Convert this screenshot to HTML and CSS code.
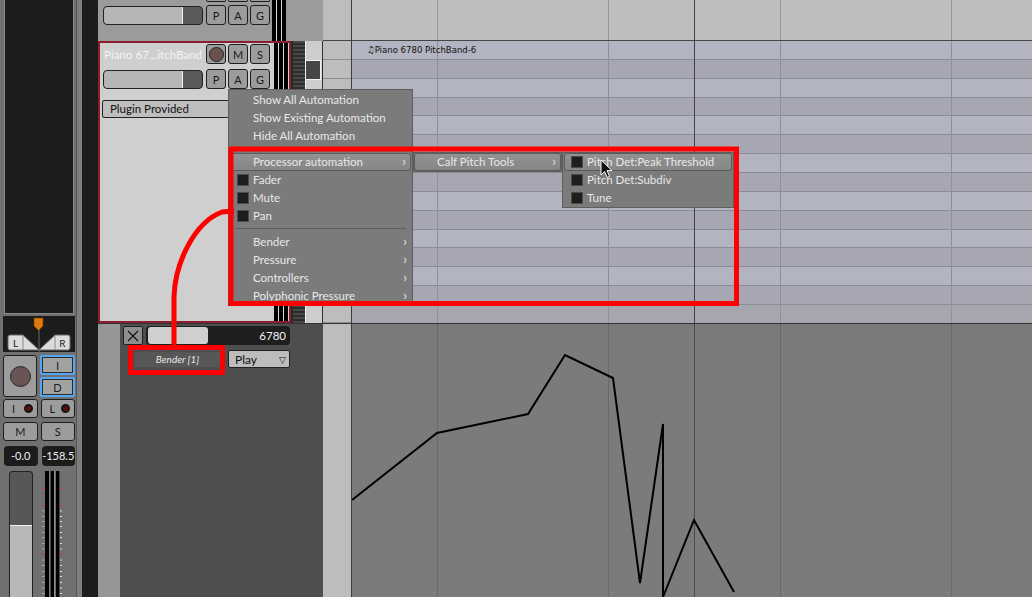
FILE: index.html
```html
<!DOCTYPE html>
<html lang="en">
<head>
    <meta charset="UTF-8">
    <title>Automation menu</title>
    <link rel="stylesheet" href="styles.css">
</head>
<body>
    <div class="app">
        <!-- mixer strip -->
        <aside class="strip">
            <div class="strip-body">
                <div class="plugin-box"></div>
                <div class="panner">
                    <svg width="72" height="36" viewBox="0 0 72 36">
                        <line x1="36" y1="2" x2="36" y2="36" stroke="#666" stroke-width="1"/>
                        <path d="M7 19 H20 L36 34 H7 A2 2 0 0 1 5 32 V21 A2 2 0 0 1 7 19 Z" fill="#dcdcdc" stroke="#6a6a6a"/>
                        <path d="M65 19 H52 L36 34 H65 A2 2 0 0 0 67 32 V21 A2 2 0 0 0 65 19 Z" fill="#dcdcdc" stroke="#6a6a6a"/>
                        <line x1="20" y1="19" x2="20" y2="34" stroke="#8a8a8a"/>
                        <line x1="52" y1="19" x2="52" y2="34" stroke="#8a8a8a"/>
                        <text x="12.5" y="30.5" font-size="10" text-anchor="middle" fill="#222" font-family="Lato, sans-serif">L</text>
                        <text x="59.5" y="30.5" font-size="10" text-anchor="middle" fill="#222" font-family="Lato, sans-serif">R</text>
                        <polygon points="31,2 40,2 40,10 35.5,14.5 31,10" fill="#e0770f" stroke="#7a3d00" stroke-width="0.6"/>
                    </svg>
                </div>
                <div class="rec-row">
                    <div class="btn rec-big"><span class="rec-dot"></span></div>
                    <div class="id-col">
                        <div class="btn blue">I</div>
                        <div class="btn blue">D</div>
                    </div>
                </div>
                <div class="pair">
                    <div class="btn led-btn">I <span class="led"></span></div>
                    <div class="btn led-btn">L <span class="led"></span></div>
                </div>
                <div class="pair pair-ms">
                    <div class="btn">M</div>
                    <div class="btn">S</div>
                </div>
                <div class="pair pair-readout">
                    <span class="readout">-0.0</span>
                    <span class="readout">-158.5</span>
                </div>
                <div class="fader-row">
                    <div class="vfader"></div>
                    <svg class="vmeter" width="20" height="126" viewBox="0 0 20 126">
                        <rect x="3" y="0" width="14.5" height="126" fill="#b5b5b5"/>
                        <rect x="3" y="0" width="4.3" height="126" fill="#000"/>
                        <rect x="8.4" y="0" width="3.8" height="126" fill="#000"/>
                        <rect x="13.6" y="0" width="3.9" height="126" fill="#000"/>
                        <g stroke-width="1">
                            <line x1="0" x2="2.5" y1="5.5" y2="5.5" stroke="#a05555"/><line x1="18" x2="20" y1="5.5" y2="5.5" stroke="#a05555"/>
                            <line x1="0" x2="2.5" y1="11.5" y2="11.5" stroke="#a05555"/><line x1="18" x2="20" y1="11.5" y2="11.5" stroke="#a05555"/>
                            <line x1="0" x2="2.5" y1="17.5" y2="17.5" stroke="#e02a2a"/><line x1="18" x2="20" y1="17.5" y2="17.5" stroke="#e02a2a"/>
                            <line x1="0" x2="2.5" y1="23" y2="23" stroke="#a05555"/><line x1="18" x2="20" y1="23" y2="23" stroke="#a05555"/>
                            <line x1="0" x2="2.5" y1="28.5" y2="28.5" stroke="#a05555"/><line x1="18" x2="20" y1="28.5" y2="28.5" stroke="#a05555"/>
                            <line x1="0" x2="2.5" y1="34.5" y2="34.5" stroke="#e02a2a"/><line x1="18" x2="20" y1="34.5" y2="34.5" stroke="#e02a2a"/>
                            <line x1="0" x2="2.5" y1="40" y2="40" stroke="#aaa"/><line x1="18" x2="20" y1="40" y2="40" stroke="#ddd"/>
                            <line x1="0" x2="2.5" y1="45.5" y2="45.5" stroke="#aaa"/><line x1="18" x2="20" y1="45.5" y2="45.5" stroke="#ddd"/>
                            <line x1="0" x2="2.5" y1="50.5" y2="50.5" stroke="#aaa"/><line x1="18" x2="20" y1="50.5" y2="50.5" stroke="#ddd"/>
                            <line x1="0" x2="2.5" y1="55.5" y2="55.5" stroke="#aaa"/><line x1="18" x2="20" y1="55.5" y2="55.5" stroke="#ddd"/>
                            <line x1="0" x2="2.5" y1="61.5" y2="61.5" stroke="#aaa"/><line x1="18" x2="20" y1="61.5" y2="61.5" stroke="#ddd"/>
                            <line x1="0" x2="2.5" y1="66.5" y2="66.5" stroke="#aaa"/><line x1="18" x2="20" y1="66.5" y2="66.5" stroke="#ddd"/>
                            <line x1="0" x2="2.5" y1="72.5" y2="72.5" stroke="#aaa"/><line x1="18" x2="20" y1="72.5" y2="72.5" stroke="#ddd"/>
                            <line x1="0" x2="2.5" y1="78" y2="78" stroke="#aaa"/><line x1="18" x2="20" y1="78" y2="78" stroke="#ddd"/>
                            <line x1="0" x2="2.5" y1="83.5" y2="83.5" stroke="#e02a2a"/><line x1="18" x2="20" y1="83.5" y2="83.5" stroke="#e02a2a"/>
                            <line x1="0" x2="2.5" y1="89" y2="89" stroke="#aaa"/><line x1="18" x2="20" y1="89" y2="89" stroke="#ddd"/>
                            <line x1="0" x2="2.5" y1="94.5" y2="94.5" stroke="#aaa"/><line x1="18" x2="20" y1="94.5" y2="94.5" stroke="#ddd"/>
                            <line x1="0" x2="2.5" y1="100.5" y2="100.5" stroke="#aaa"/><line x1="18" x2="20" y1="100.5" y2="100.5" stroke="#ddd"/>
                            <line x1="0" x2="2.5" y1="105.5" y2="105.5" stroke="#aaa"/><line x1="18" x2="20" y1="105.5" y2="105.5" stroke="#ddd"/>
                            <line x1="0" x2="2.5" y1="111.5" y2="111.5" stroke="#aaa"/><line x1="18" x2="20" y1="111.5" y2="111.5" stroke="#ddd"/>
                            <line x1="0" x2="2.5" y1="117" y2="117" stroke="#aaa"/><line x1="18" x2="20" y1="117" y2="117" stroke="#ddd"/>
                            <line x1="0" x2="2.5" y1="122.5" y2="122.5" stroke="#aaa"/><line x1="18" x2="20" y1="122.5" y2="122.5" stroke="#ddd"/>
                        </g>
                    </svg>
                </div>
            </div>
            <div class="strip-edge"></div>
        </aside>

        <div class="gutter"></div>

        <main class="tracks">
            <!-- track above, mostly scrolled away -->
            <section class="track track-top">
                <div class="head head-top">
                    <div class="head-ctl">
                        <div class="peek"><span></span><span></span><span></span></div>
                        <div class="ctl-row">
                            <div class="hfader"></div>
                            <span class="btn sq">P</span>
                            <span class="btn sq">A</span>
                            <span class="btn sq">G</span>
                        </div>
                    </div>
                    <div class="meter3"></div>
                </div>
                <div class="keys"></div>
                <div class="lane lane-top"></div>
            </section>

            <!-- selected MIDI track -->
            <section class="track track-sel">
                <div class="head head-sel">
                    <div class="sel-box">
                        <div class="head-ctl">
                            <div class="ctl-row name-row">
                                <span class="track-name">Piano 67...itchBand</span>
                                <span class="btn sq"><span class="rec-small"></span></span>
                                <span class="btn sq">M</span>
                                <span class="btn sq">S</span>
                            </div>
                            <div class="ctl-row fader-line">
                                <div class="hfader"></div>
                                <span class="btn sq">P</span>
                                <span class="btn sq">A</span>
                                <span class="btn sq">G</span>
                            </div>
                            <div class="plugin-select">Plugin Provided</div>
                        </div>
                        <div class="meter3"></div>
                    </div>
                    <div class="mini-meter"></div>
                    <div class="vscroll"><div class="knob"></div></div>
                </div>
                <div class="keys keys-rows" id="keyRows"></div>
                <div class="lane lane-notes">
                    <div class="rows" id="noteRows"></div>
                    <span class="region-name">♫Piano 6780 PitchBand-6</span>
                </div>
            </section>

            <!-- automation lane -->
            <section class="track track-auto">
                <div class="head head-auto">
                    <div class="indent"></div>
                    <div class="auto-ctl">
                        <div class="ctl-row">
                            <span class="btn close-btn">
                                <svg width="12" height="12" viewBox="0 0 12 12"><path d="M1 1 L11 11 M11 1 L1 11" stroke="#111" stroke-width="1.1"/></svg>
                            </span>
                            <div class="value-slider"><div class="value-fill"></div><span>6780</span></div>
                        </div>
                        <div class="ctl-row auto-row2">
                            <span class="param-name">Bender [1]</span>
                            <span class="play-select">Play <span class="tri">▽</span></span>
                        </div>
                    </div>
                </div>
                <div class="keys"></div>
                <div class="lane lane-auto">
                    <svg class="curve" width="680" height="273" viewBox="0 0 680 273">
                        <polyline points="0,176 85,109 176,90 213,31 261,54 288,259 311,100 311,273 342,196 382,268" fill="none" stroke="#000" stroke-width="2" stroke-linejoin="miter"/>
                    </svg>
                </div>
            </section>
        </main>
    </div>

    <!-- context menus -->
    <div class="menu menu-main">
        <div class="menu-item">Show All Automation</div>
        <div class="menu-item">Show Existing Automation</div>
        <div class="menu-item">Hide All Automation</div>
        <div class="menu-sep"></div>
        <div class="menu-item sub hover">Processor automation</div>
        <div class="menu-item"><span class="check"></span>Fader</div>
        <div class="menu-item"><span class="check"></span>Mute</div>
        <div class="menu-item"><span class="check"></span>Pan</div>
        <div class="menu-sep"></div>
        <div class="menu-item sub">Bender</div>
        <div class="menu-item sub">Pressure</div>
        <div class="menu-item sub">Controllers</div>
        <div class="menu-item sub">Polyphonic Pressure</div>
    </div>
    <div class="menu menu-plugins">
        <div class="menu-item sub hover">Calf Pitch Tools</div>
    </div>
    <div class="menu menu-params">
        <div class="menu-item hover"><span class="check"></span>Pitch Det:Peak Threshold</div>
        <div class="menu-item"><span class="check"></span>Pitch Det:Subdiv</div>
        <div class="menu-item"><span class="check"></span>Tune</div>
    </div>

    <!-- hand-drawn marks -->
    <svg class="marks" width="1032" height="597" viewBox="0 0 1032 597">
        <rect x="231" y="149" width="505.5" height="154.5" fill="none" stroke="#ff0000" stroke-width="5"/>
        <rect x="130.5" y="347.5" width="92" height="25" fill="none" stroke="#ff0000" stroke-width="5"/>
        <path d="M174 349 V297 C175 262 195 222 222 212 L234 211" fill="none" stroke="#ff0000" stroke-width="5"/>
    </svg>

    <svg class="cursor" width="14" height="20" viewBox="0 0 14 20">
        <path d="M1 1 L1 16 L4.6 12.6 L7.2 18.4 L9.6 17.4 L7 11.6 L12 11.6 Z" fill="#111" stroke="#fff" stroke-width="1"/>
    </svg>

    <script>
        // piano-roll rows, alternating shades
        const noteRows = document.getElementById('noteRows');
        const keyRows = document.getElementById('keyRows');
        for (let i = 0; i < 15; i++) {
            const row = document.createElement('div');
            row.className = 'row';
            noteRows.appendChild(row);
            const key = document.createElement('div');
            key.className = 'key';
            keyRows.appendChild(key);
        }
    </script>
</body>
</html>
```

FILE: styles.css
```css
* {
    margin: 0;
    padding: 0;
    box-sizing: border-box;
}

body {
    width: 1032px;
    height: 597px;
    overflow: hidden;
    position: relative;
    background-color: #1c1c1c;
    font-family: 'Lato', 'DejaVu Sans', sans-serif;
    font-size: 11px;
    color: #1a1a1a;
}

.app {
    display: flex;
    height: 597px;
}

/* mixer strip */
.strip {
    width: 82px;
    flex: none;
    display: flex;
    background-color: #707070;
}

.strip-body {
    width: 72px;
    margin-left: 3px;
    display: flex;
    flex-direction: column;
}

.strip-edge {
    width: 6px;
    margin-left: 1px;
    border-left: 1px solid #555;
    background-color: #7e7e7e;
}

.plugin-box {
    height: 314px;
    flex: none;
    margin: 0 1px;
    background-color: #1c1c1c;
    border: 1px solid #8a8a8a;
    border-top: none;
}

.panner {
    height: 36px;
    flex: none;
    margin-top: 2px;
    background-color: #1c1c1c;
}

.panner svg {
    display: block;
}

.btn {
    display: flex;
    align-items: center;
    justify-content: center;
    background-color: #9c9c9c;
    border: 1px solid #1e1e1e;
    border-radius: 3px;
    color: #1a1a1a;
    font-size: 11px;
}

.rec-row {
    display: flex;
    gap: 3px;
    margin-top: 3px;
    height: 42px;
    flex: none;
}

.rec-big {
    width: 34px;
    height: 42px;
}

.rec-dot {
    width: 21px;
    height: 21px;
    border-radius: 50%;
    background-color: #6b5454;
    border: 1px solid #262626;
}

.id-col {
    width: 35px;
    display: flex;
    flex-direction: column;
    gap: 2px;
}

.btn.blue {
    height: 20px;
    border: 2px solid #55a6f5;
    border-radius: 2px;
    box-shadow: inset 0 0 0 1px #2b2b2b;
    background-color: #a2a2a2;
}

.pair {
    display: flex;
    gap: 3px;
    margin-top: 2px;
    height: 19px;
    flex: none;
}

.pair .btn {
    flex: 1;
}

.pair-ms {
    margin-top: 4px;
}

.led-btn {
    justify-content: space-between !important;
    padding: 0 4px 0 8px;
}

.led {
    width: 9px;
    height: 9px;
    border-radius: 50%;
    background-color: #6a0c0c;
    border: 2px solid #141414;
}

.pair-readout {
    margin-top: 5px;
    height: 20px;
    gap: 4px;
    padding-left: 1px;
}

.readout {
    flex: 1;
    background-color: #1c1c1c;
    border-radius: 4px;
    color: #eee;
    text-align: center;
    line-height: 20px;
    font-size: 11px;
}

.fader-row {
    display: flex;
    margin-top: 5px;
    flex: 1;
}

.vfader {
    width: 24px;
    margin-left: 6px;
    border: 1px solid #222;
    border-bottom: none;
    border-radius: 4px 4px 0 0;
    background: linear-gradient(#575757 0 53px, #f2f2f2 53px 54px, #b8b8b8 54px);
}

.vmeter {
    margin-left: 9px;
    display: block;
}

.gutter {
    width: 16px;
    flex: none;
    background-color: #1c1c1c;
}

/* tracks */
.tracks {
    flex: 1;
    display: flex;
    flex-direction: column;
}

.track {
    display: flex;
    flex: none;
}

.track-top {
    height: 41px;
}

.track-sel {
    height: 282px;
}

.track-auto {
    flex: 1;
    border-top: 1px solid #333;
}

.head {
    width: 225px;
    flex: none;
    display: flex;
}

.keys {
    width: 29px;
    flex: none;
    background-color: #bdbdbd;
    border-right: 1px solid #3c3c3c;
}

.lane {
    flex: 1;
    position: relative;
    --gl: #9a9a9a;
    --bar: #444;
}

.lane::after {
    content: '';
    position: absolute;
    inset: 0;
    pointer-events: none;
    background-image:
        linear-gradient(var(--gl), var(--gl)),
        linear-gradient(var(--gl), var(--gl)),
        linear-gradient(var(--bar), var(--bar)),
        linear-gradient(var(--gl), var(--gl)),
        linear-gradient(var(--gl), var(--gl));
    background-size: 1px 100%;
    background-repeat: no-repeat;
    background-position: 85px 0, 256px 0, 342px 0, 428px 0, 599px 0;
}

/* head: track above */
.head-top {
    background-color: #9b9b9b;
}

.head-ctl {
    width: 176px;
    padding-left: 5px;
}

.peek {
    display: flex;
    gap: 2px;
    margin-left: 103px;
    height: 2px;
}

.peek span {
    width: 20px;
    border: 1px solid #1e1e1e;
    border-top: none;
    border-radius: 0 0 2px 2px;
    background-color: #9c9c9c;
}

.ctl-row {
    display: flex;
    align-items: center;
    gap: 2px;
}

.head-top .ctl-row {
    margin-top: 3px;
}

.hfader {
    width: 100px;
    height: 19px;
    margin-right: 1px;
    border: 1px solid #222;
    border-radius: 4px;
    background: linear-gradient(to right, #b5b5b5 0 78px, #f0f0f0 78px 79px, #5a5a5a 79px);
}

.btn.sq {
    width: 20px;
    height: 20px;
}

.meter3 {
    width: 14px;
    flex: none;
    background: linear-gradient(to right, #000 0 4px, #d8d8d8 4px 5px, #000 5px 9px, #d8d8d8 9px 10px, #000 10px 14px);
}

.head-top .meter3 {
    margin-left: -2px;
}

.lane-top {
    background-color: #bebebe;
    border-bottom: 1px solid #454545;
}

.track-top .keys {
    border-bottom: 1px solid #454545;
}

/* head: selected track */
.head-sel {
    background-color: #9b9b9b;
}

.sel-box {
    width: 193px;
    display: flex;
    border: 2px solid #8c1d2d;
    background-color: #cfcfcf;
}

.sel-box .head-ctl {
    width: 174px;
    padding-left: 3px;
}

.name-row {
    margin-top: 1px;
}

.track-name {
    width: 101px;
    padding-left: 1px;
    color: #f4f4f4;
    font-size: 11.6px;
    white-space: nowrap;
}

.rec-small {
    width: 15px;
    height: 15px;
    border-radius: 50%;
    background-color: #6c5050;
    border: 1px solid #222;
}

.fader-line {
    margin-top: 5px;
}

.plugin-select {
    width: 168px;
    height: 18px;
    margin: 11px 0 0 -1px;
    padding-left: 7px;
    line-height: 16px;
    background-color: #bebebe;
    border: 1px solid #222;
    border-radius: 2px;
    font-size: 11.5px;
    color: #111;
}

.sel-box .meter3 {
    margin-left: 0;
}

.mini-meter {
    width: 14px;
    flex: none;
    background: repeating-linear-gradient(to bottom, #474747 0 2px, #2c2c2c 2px 4px);
    border-left: 2px solid #2a2a2a;
}

.vscroll {
    width: 18px;
    flex: none;
    background-color: #cdcdcd;
    border-left: 1px solid #f2f2f2;
    border-right: 1px solid #2e2e2e;
    padding-top: 19px;
}

.knob {
    width: 15px;
    height: 20px;
    background-color: #474747;
    border: 1px solid #f2f2f2;
    border-left: none;
}

.keys-rows {
    display: flex;
    flex-direction: column;
}

.key {
    flex: 1;
    border-bottom: 1px solid #8e8e8e;
}

.lane-notes {
    --gl: #8f909b;
}

.rows {
    display: flex;
    flex-direction: column;
    height: 100%;
}

.row {
    flex: 1;
    border-bottom: 1px solid #8b8c97;
}

.row:nth-child(odd) {
    background-color: #b3b4c1;
}

.row:nth-child(even) {
    background-color: #a6a7b3;
}

.row:last-child {
    background-color: #a5a6ae;
    border-bottom: none;
}

.region-name {
    position: absolute;
    left: 15px;
    top: 3px;
    font-family: 'DejaVu Sans', sans-serif;
    font-stretch: condensed;
    font-size: 9.5px;
    color: #111;
    z-index: 1;
}

/* head: automation */
.indent {
    width: 22px;
    background-color: #969696;
}

.auto-ctl {
    flex: 1;
    background-color: #4e4e4e;
    padding: 2px 0 0 3px;
}

.close-btn {
    width: 20px;
    height: 19px;
    border-radius: 2px;
    background-color: #8e8e8e;
}

.value-slider {
    position: relative;
    width: 144px;
    height: 19px;
    margin-left: 1px;
    background-color: #1e1e1e;
    border-radius: 4px;
    color: #f2f2f2;
    font-size: 11.5px;
    text-align: right;
    padding-right: 4px;
    line-height: 19px;
}

.value-fill {
    position: absolute;
    left: 2px;
    top: 1px;
    bottom: 1px;
    width: 60px;
    background-color: #cfcfcf;
    border-radius: 3px;
}

.auto-row2 {
    margin-top: 5px;
    gap: 0;
}

.param-name {
    width: 85px;
    height: 15px;
    margin-left: 12px;
    background-color: #575757;
    color: #e8e8e8;
    font-style: italic;
    font-size: 10px;
    text-align: center;
    line-height: 15px;
}

.play-select {
    width: 62px;
    height: 18px;
    margin-left: 8px;
    display: flex;
    justify-content: space-between;
    align-items: center;
    padding: 0 3px 0 6px;
    background-color: #bdbdbd;
    border: 1px solid #222;
    border-radius: 2px;
    font-size: 12px;
    color: #111;
}

.tri {
    font-size: 9px;
}

.lane-auto {
    background-color: #7b7b7b;
    --gl: #686868;
    --bar: #4c4c4c;
}

.curve {
    display: block;
    position: relative;
    z-index: 1;
}

/* context menus */
.menu {
    position: absolute;
    background-color: #7b7b7b;
    border: 1px solid #5e5e5e;
    color: #e8e8e8;
    font-size: 11.5px;
    z-index: 5;
}

.menu-main {
    left: 228px;
    top: 89px;
    width: 185px;
    height: 217px;
    padding-top: 1px;
}

.menu-plugins {
    left: 413px;
    top: 152px;
    width: 149px;
}

.menu-params {
    left: 562px;
    top: 152px;
    width: 172px;
}

.menu-item {
    position: relative;
    height: 18px;
    display: flex;
    align-items: center;
    padding-left: 24px;
    padding-bottom: 2px;
    white-space: nowrap;
}

.menu-plugins .menu-item {
    padding-left: 23px;
}

.menu-item.sub::after {
    content: '\203A';
    position: absolute;
    right: 5px;
    top: 0;
    font-size: 13px;
}

.menu-item.hover {
    margin: 0 1px;
    padding-left: 23px;
    background: linear-gradient(#939393, #858585);
    box-shadow: inset 0 0 0 1px #5b5b5b;
    border-radius: 3px;
}

.menu-plugins .menu-item.hover {
    margin: 0;
    padding-left: 23px;
}

.check {
    position: absolute;
    left: 8px;
    top: 3px;
    width: 12px;
    height: 12px;
    background-color: #1e1e1e;
    border: 1px solid #4c4c4c;
}

.menu-item.hover .check {
    left: 7px;
}

.menu-sep {
    height: 1px;
    margin: 3px 6px 4px;
    background-color: #5d5d5d;
}

/* annotation overlay */
.marks {
    position: absolute;
    left: 0;
    top: 0;
    z-index: 10;
    pointer-events: none;
}

.cursor {
    position: absolute;
    left: 600px;
    top: 159px;
    z-index: 11;
}
```
